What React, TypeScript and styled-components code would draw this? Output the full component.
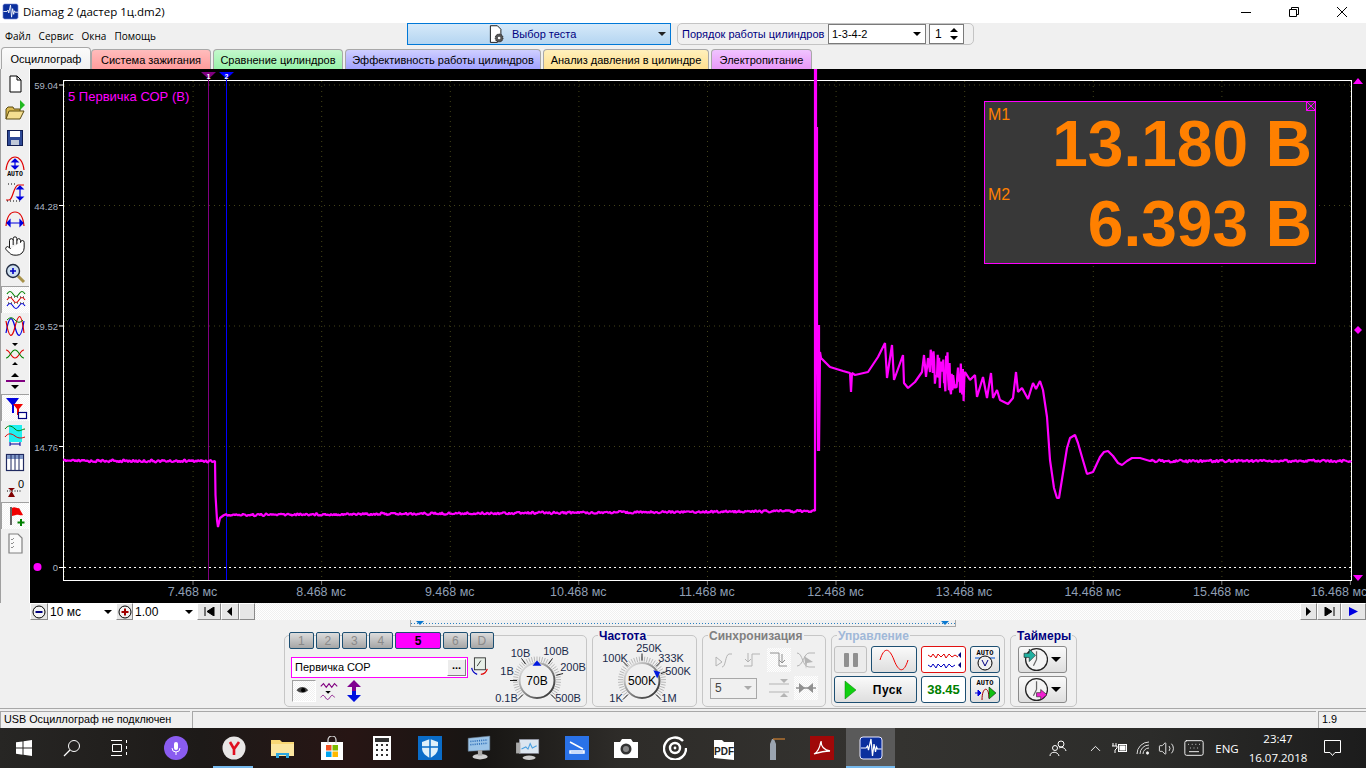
import React from 'react';
import styled, { createGlobalStyle } from 'styled-components';
import { Hand, Volume2, ChevronUp, Keyboard } from 'lucide-react';

const GlobalStyle = createGlobalStyle`
  html, body { margin: 0; padding: 0; overflow: hidden; background: #f0f0f0; }
  #root { width: 1366px; height: 768px; }
  * { box-sizing: border-box; }
`;

const Page = styled.div`
  width: 1366px;
  height: 768px;
  display: flex;
  flex-direction: column;
  font-family: 'Liberation Sans', Arial, sans-serif;
  font-size: 11px;
  color: #000;
  background: #f0f0f0;
`;

/* ---------- title + menu ---------- */
const TitleBar = styled.div`
  height: 23px;
  background: #fff;
  display: flex;
  align-items: center;
  padding-left: 2px;
`;
const TitleText = styled.span`
  margin-left: 4px;
  font-family: 'Open Sans', sans-serif;
  font-size: 11.5px;
  flex: 1;
`;
const WinButton = styled.div`
  width: 48px;
  height: 23px;
  display: flex;
  align-items: center;
  justify-content: center;
`;
const MenuBar = styled.div`
  height: 24px;
  display: flex;
  align-items: flex-start;
`;
const MenuList = styled.nav`
  width: 407px;
  height: 24px;
  display: flex;
  align-items: center;
  gap: 8px;
  padding: 2px 0 0 5px;
  font-family: 'Open Sans', sans-serif;
  font-size: 10px;
`;
const TestSelect = styled.div`
  width: 264px;
  height: 22px;
  border: 1px solid #0078d7;
  background: linear-gradient(#d6e9f9, #b4d5f1);
  display: flex;
  align-items: center;
  padding-left: 78px;
  color: #000080;
  position: relative;
`;
const TestLabel = styled.span`
  margin-left: 5px;
  font-size: 11px;
  flex: 1;
`;
const DropArrow = styled.i<{ $color?: string; $big?: boolean }>`
  width: 0;
  height: 0;
  border-left: ${(p) => (p.$big ? 5 : 4)}px solid transparent;
  border-right: ${(p) => (p.$big ? 5 : 4)}px solid transparent;
  border-top: ${(p) => (p.$big ? 5 : 4)}px solid ${(p) => p.$color || '#000'};
  margin: ${(p) => (p.$big ? '0 3px 0 0' : '0 4px')};
`;
const OrderBox = styled.div`
  margin-left: 6px;
  width: 297px;
  height: 22px;
  border: 1px solid #c4c4c4;
  border-radius: 5px;
  display: flex;
  align-items: center;
  padding-left: 4px;
  color: #000080;
  gap: 4px;
`;
const OrderLabel = styled.span`
  width: 142px;
  white-space: nowrap;
`;
const OrderSelect = styled.div`
  width: 98px;
  height: 20px;
  background: #fff;
  border: 1px solid #7a7a7a;
  color: #000;
  display: flex;
  align-items: center;
  justify-content: space-between;
  padding-left: 3px;
`;
const SpinBox = styled.div`
  width: 35px;
  height: 20px;
  margin-left: -1px;
  background: #fff;
  border: 1px solid #7a7a7a;
  color: #000;
  font-size: 12px;
  display: flex;
  align-items: center;
  justify-content: space-between;
  padding: 0 5px;
`;
const SpinArrows = styled.span`
  display: flex;
  flex-direction: column;
  gap: 4px;
`;
const Tri = styled.i<{ $up?: boolean }>`
  display: block;
  width: 0;
  height: 0;
  border-left: 4px solid transparent;
  border-right: 4px solid transparent;
  ${(p) => (p.$up ? 'border-bottom: 4px solid #000;' : 'border-top: 4px solid #000;')}
`;

/* ---------- tabs ---------- */
const TabStrip = styled.div`
  height: 22px;
  display: flex;
  align-items: flex-end;
  gap: 2px;
  padding-left: 1px;
`;
const TAB_TONES: Record<string, string> = {
  plain: 'linear-gradient(#fbfbfb, #f0f0f0)',
  red: 'linear-gradient(#ffbcbc, #ff9c9c)',
  green: 'linear-gradient(#c4f8cc, #98f2aa)',
  blue: 'linear-gradient(#cfcfff, #a2a2ff)',
  yellow: 'linear-gradient(#fff0bc, #ffe090)',
  purple: 'linear-gradient(#f0c4ff, #e898f8)',
};
const Tab = styled.div<{ $tone: string; $w: number; $active?: boolean }>`
  width: ${(p) => p.$w}px;
  height: ${(p) => (p.$active ? 22 : 20)}px;
  margin-right: ${(p) => (p.$active ? -2 : 0)}px;
  background: ${(p) => TAB_TONES[p.$tone]};
  border: 1px solid #a8a8a8;
  border-bottom: none;
  border-radius: 4px 4px 0 0;
  display: flex;
  align-items: center;
  justify-content: center;
  white-space: nowrap;
  font-size: 11px;
`;

/* ---------- workspace ---------- */
const Workspace = styled.div`
  height: 534px;
  display: flex;
`;
const ToolColumn = styled.div`
  width: 30px;
  border-left: 1px solid #a0a0a0;
  border-right: 1px solid #fff;
  padding-top: 1px;
  display: flex;
  flex-direction: column;
`;
const ToolButton = styled.div<{ $selected?: boolean }>`
  height: 27px;
  display: flex;
  align-items: center;
  justify-content: center;
  ${(p) =>
    p.$selected &&
    `background: repeating-conic-gradient(#fff 0 25%, #f4f4f4 0 50%) 0 0/2px 2px;
     border-top: 1px solid #a0a0a0;
     border-left: 1px solid #a0a0a0;`}
`;
const Scope = styled.div`
  position: relative;
  flex: 1;
  background: #000;
`;
const ScopeCanvas = styled.svg`
  display: block;
  width: 1336px;
  height: 534px;
`;
const ChannelLegend = styled.div`
  position: absolute;
  left: 38px;
  top: 20px;
  color: #ff00ff;
  font-size: 13px;
`;
const MeasurePanel = styled.div`
  position: absolute;
  left: 954px;
  top: 32px;
  width: 332px;
  height: 163px;
  background: #383838;
  border: 1px solid #ff00ff;
  color: #ff8000;
  padding: 0 3px 0 3px;
`;
const MeasureRow = styled.div`
  height: 80px;
  display: flex;
  justify-content: space-between;
`;
const MeasureName = styled.span`
  font-size: 16px;
  line-height: 18px;
  margin-top: 4px;
`;
const MeasureValue = styled.span`
  font-size: 64px;
  font-weight: bold;
  line-height: 64px;
  margin-top: 10px;
`;
const MeasureClose = styled.svg`
  position: absolute;
  right: -1px;
  top: -1px;
`;
const AxisY = styled.text`
  font-size: 9.5px;
  fill: #a9b4c2;
  text-anchor: end;
`;
const AxisX = styled.text`
  font-size: 12.5px;
  fill: #8f9fb4;
  text-anchor: middle;
`;

/* ---------- scroll row ---------- */
const ScrollRow = styled.div`
  height: 17px;
  margin-left: 30px;
  display: flex;
  background: #fff;
`;
const Bevel = styled.div<{ $w: number }>`
  width: ${(p) => p.$w}px;
  height: 17px;
  flex: none;
  background: #e6e6e6;
  border: 1px solid;
  border-color: #fff #8a8a8a #8a8a8a #fff;
  display: flex;
  align-items: center;
  justify-content: center;
`;
const ComboText = styled.div<{ $w: number }>`
  width: ${(p) => p.$w}px;
  height: 17px;
  flex: none;
  background: #fff;
  display: flex;
  align-items: center;
  justify-content: space-between;
  padding-left: 2px;
  font-size: 12px;
`;
const ScrollTrack = styled.div`
  flex: 1;
  background: repeating-conic-gradient(#fff 0 25%, #f0f0f0 0 50%) 0 0/2px 2px;
`;

/* ---------- control deck ---------- */
const Deck = styled.div`
  height: 88px;
  display: flex;
  flex-direction: column;
`;
const Splitter = styled.div`
  height: 7px;
  width: 546px;
  margin-left: 410px;
  border: 1px solid #a8a8a8;
  border-top: none;
  display: flex;
  align-items: center;
  padding: 0 6px 0 5px;
  justify-content: space-between;
  background-image: linear-gradient(to right, #2a7fc0 1px, transparent 1px);
  background-size: 3px 1px;
  background-repeat: repeat-x;
  background-position: 0 3px;
`;
const SplitterMark = styled.i`
  width: 0;
  height: 0;
  border-left: 4px solid transparent;
  border-right: 4px solid transparent;
  border-top: 4px solid #0a78d0;
`;
const GroupRow = styled.div`
  display: flex;
  gap: 5px;
  padding: 8px 0 0 284px;
`;
const Group = styled.div<{ $w: number }>`
  position: relative;
  width: ${(p) => p.$w}px;
  height: 72px;
  border: 1px solid #c6c6c6;
  border-radius: 5px;
`;
const GroupTitle = styled.span<{ $color: string }>`
  position: absolute;
  left: 5px;
  top: -6px;
  padding: 0 1px;
  background: #f0f0f0;
  font-size: 12px;
  line-height: 13px;
  font-weight: bold;
  color: ${(p) => p.$color};
  white-space: nowrap;
`;
const ChannelGroupBody = styled.div`
  height: 70px;
  display: flex;
  justify-content: space-between;
  align-items: flex-end;
`;
const ChannelColumn = styled.div`
  width: 209px;
  height: 74px;
  padding-left: 4px;
  align-self: flex-start;
  margin-top: -4px;
`;
const ChannelRow = styled.div`
  display: flex;
  gap: 2px;
`;
const ChannelButton = styled.div<{ $active?: boolean }>`
  width: ${(p) => (p.$active ? 47 : 25)}px;
  height: 17px;
  border: 1px solid #1d4f72;
  border-radius: 2px;
  background: ${(p) => (p.$active ? '#ff00ff' : 'linear-gradient(#dcdcdc, #a6a6a6)')};
  color: ${(p) => (p.$active ? '#000' : '#8a8a8a')};
  font-weight: ${(p) => (p.$active ? 'bold' : 'normal')};
  font-size: 12px;
  display: flex;
  align-items: center;
  justify-content: center;
`;
const ChannelInputRow = styled.div`
  display: flex;
  align-items: center;
  margin: 7px 0 0 2px;
`;
const ChannelInput = styled.div`
  width: 177px;
  height: 21px;
  border: 1px solid #ff00ff;
  background: #fff;
  display: flex;
  align-items: center;
  justify-content: space-between;
  padding: 0 0 0 3px;
  font-size: 11px;
`;
const DotsButton = styled.div`
  width: 19px;
  height: 17px;
  margin-right: 1px;
  background: #ececec;
  border: 1px solid;
  border-color: #fff #808080 #808080 #fff;
  font-weight: bold;
  line-height: 11px;
  text-align: center;
`;
const ChannelTools = styled.div`
  display: flex;
  align-items: center;
  gap: 1px;
  margin: 2px 0 0 3px;
`;
const MiniTool = styled.div<{ $selected?: boolean }>`
  width: 24px;
  height: 22px;
  display: flex;
  align-items: center;
  justify-content: center;
  ${(p) =>
    p.$selected &&
    `background: repeating-conic-gradient(#fff 0 25%, #f0f0f0 0 50%) 0 0/2px 2px;
     border: 1px solid; border-color: #a0a0a0 #fff #fff #a0a0a0;`}
`;
const DialCanvas = styled.svg`
  display: block;
  flex: none;
`;
const DialLabel = styled.text`
  font-size: 11px;
  fill: #1b2a4a;
  text-anchor: middle;
`;
const DialValue = styled.text`
  font-size: 12px;
  fill: #000;
  text-anchor: middle;
`;
const SyncGrid = styled.div`
  display: grid;
  grid-template-columns: repeat(4, 27px);
  grid-auto-rows: 28px;
  padding: 10px 0 0 8px;
  align-items: center;
  justify-items: center;
`;
const SyncCell = styled.div<{ $dither?: boolean }>`
  width: 24px;
  height: 24px;
  display: flex;
  align-items: center;
  justify-content: center;
  ${(p) => p.$dither && 'background: repeating-conic-gradient(#fff 0 25%, #f0f0f0 0 50%) 0 0/2px 2px;'}
`;
const SyncSelect = styled.div`
  grid-column: span 2;
  justify-self: start;
  margin-left: -1px;
  width: 47px;
  height: 21px;
  border: 1px solid #a8a8a8;
  color: #444;
  font-size: 12px;
  display: flex;
  align-items: center;
  justify-content: space-between;
  padding-left: 4px;
`;
const ControlGrid = styled.div`
  display: grid;
  grid-template-columns: 33px 46px 45px 30px;
  grid-auto-rows: 27px;
  gap: 3px 4px;
  padding: 10px 0 0 2px;
`;
const ControlButton = styled.div<{ $tone?: 'navy' | 'red' | 'off' | 'white'; $span?: number }>`
  grid-column: span ${(p) => p.$span || 1};
  border-radius: 3px;
  border: 1px solid
    ${(p) => (p.$tone === 'red' ? '#e01010' : p.$tone === 'off' ? '#c0c0c0' : '#1d4f72')};
  background: ${(p) =>
    p.$tone === 'red' || p.$tone === 'white'
      ? '#fff'
      : p.$tone === 'off'
        ? '#ececec'
        : 'linear-gradient(#fafafa, #dedede)'};
  display: flex;
  align-items: center;
  justify-content: center;
`;
const StartMark = styled.svg`
  margin-left: 8px;
  flex: none;
`;
const StartLabel = styled.span`
  font-size: 12px;
  font-weight: bold;
  letter-spacing: 0.4px;
  flex: 1;
  text-align: center;
  padding-right: 6px;
`;
const TimerValue = styled.span`
  color: #008000;
  font-size: 13px;
  font-weight: bold;
`;
const TimerColumn = styled.div`
  display: flex;
  flex-direction: column;
  gap: 3px;
  padding: 10px 0 0 7px;
`;
const TimerButton = styled.div`
  width: 49px;
  height: 27px;
  border: 1px solid #8a8a8a;
  border-radius: 3px;
  background: linear-gradient(#fafafa, #dedede);
  display: flex;
  align-items: center;
  justify-content: space-between;
  padding: 0 2px 0 4px;
`;

/* ---------- status + taskbar ---------- */
const StatusBar = styled.div`
  height: 20px;
  border-top: 1px solid #a8a8a8;
  padding-top: 2px;
  display: flex;
  gap: 2px;
`;
const StatusCell = styled.div<{ $w?: number }>`
  ${(p) => (p.$w ? `width: ${p.$w}px; flex: none;` : 'flex: 1;')}
  border: 1px solid #d6d6d6;
  border-width: 1px 0 0 1px;
  border-top-color: #a8a8a8;
  border-left-color: #a8a8a8;
  padding-left: 3px;
  line-height: 15px;
  font-size: 10.8px;
`;
const Taskbar = styled.div`
  height: 40px;
  display: flex;
  align-items: stretch;
  color: #fff;
  background: linear-gradient(
    to right,
    #272624 0,
    #1d1a18 200px,
    #271514 350px,
    #171513 480px,
    #2e2c29 620px,
    #343330 900px,
    #2c2c2a 1150px,
    #1c1c1c 1366px
  );
`;
const TaskItem = styled.div<{ $w?: number; $active?: boolean; $running?: boolean; $before?: number; $after?: number }>`
  width: ${(p) => p.$w || 49}px;
  margin: 0 ${(p) => p.$after || 0}px 0 ${(p) => p.$before || 0}px;
  position: relative;
  display: flex;
  align-items: center;
  justify-content: center;
  ${(p) => p.$active && 'background: #5a5a5a;'}
  ${(p) =>
    p.$running &&
    `&::after {
      content: '';
      position: absolute;
      bottom: 0;
      left: ${p.$active ? 0 : 4}px;
      right: ${p.$active ? 0 : 5}px;
      height: 2px;
      background: #76b9ed;
    }`}
`;
const Tray = styled.div`
  margin-left: auto;
  display: flex;
  align-items: center;
  font-family: 'Open Sans', sans-serif;
  font-size: 11.5px;
`;
const TraySlot = styled.div<{ $w: number }>`
  width: ${(p) => p.$w}px;
  display: flex;
  align-items: center;
  justify-content: center;
`;
const Clock = styled.div`
  width: 70px;
  text-align: center;
  line-height: 19px;
  margin-right: 7px;
`;
const NotifySlot = styled.div`
  width: 46px;
  display: flex;
  padding-left: 4px;
`;

/* ---------- trace data ---------- */
const noise = (i: number) => {
  const v = Math.sin(i * 12.9898) * 43758.5453;
  return v - Math.floor(v) - 0.5;
};

const TAIL: [number, number][] = [
  [821, 358], [830, 367], [843, 371], [850, 373], [851, 392], [852, 373], [855, 375], [868, 372],
  [878, 357], [885, 343], [887, 378], [892, 345], [894, 380], [903, 355], [904, 383], [908, 388],
  [915, 382], [922, 372], [924, 355], [926, 377], [928, 358], [930, 372],
];
const TAIL_2: [number, number][] = [
  [965, 372], [970, 380], [975, 375], [977, 397], [983, 377], [987, 398], [991, 373], [993, 398],
  [997, 390], [1000, 400], [1008, 404], [1013, 398], [1016, 372], [1018, 392], [1022, 388],
  [1028, 399], [1033, 383], [1036, 389], [1040, 381], [1043, 390], [1047, 417], [1050, 460],
  [1054, 488], [1057, 498], [1059, 498], [1063, 473], [1067, 448], [1070, 438], [1075, 435],
  [1078, 443], [1082, 457], [1087, 474], [1093, 472], [1100, 457], [1104, 452], [1108, 451],
  [1113, 456], [1118, 463], [1122, 465], [1127, 461], [1132, 458], [1140, 458], [1150, 461],
];

const buildTrace = () => {
  const pts: [number, number][] = [];
  for (let x = 63; x < 215; x += 1) pts.push([x, 461 + noise(x) * 2.8]);
  pts.push([215, 461], [215.5, 495], [217, 520], [218, 527], [220, 518], [224, 515]);
  for (let x = 224; x < 815; x += 1) {
    pts.push([x, 515 - ((x - 224) / 591) * 4 + noise(x) * 2.6]);
  }
  pts.push([815, 511], [815, 69], [816, 69], [816, 330], [817, 127], [817, 352], [818, 451], [819, 325], [819, 451], [820, 352]);
  pts.push(...TAIL);
  for (let x = 930; x < 965; x += 0.7) {
    const env = 370 - Math.sin(((x - 930) / 35) * Math.PI) * 3 + (x - 930) * 0.3;
    pts.push([x, env + noise(x * 1.37) * 44]);
  }
  pts.push(...TAIL_2);
  for (let x = 1150; x <= 1351; x += 1) pts.push([x, 461 + noise(x) * 2.8]);
  return 'M' + pts.map(([x, y]) => `${x} ${y.toFixed(1)}`).join('L');
};
const TRACE = buildTrace();

const GRID_X = Array.from({ length: 11 }, (_, i) => 64.5 + i * 128.6);
const LEVELS = [
  { y: 85, label: '59.04' },
  { y: 205.5, label: '44.28' },
  { y: 326, label: '29.52' },
  { y: 446.5, label: '14.76' },
];
const TIMES = ['7.468', '8.468', '9.468', '10.468', '11.468', '12.468', '13.468', '14.468', '15.468', '16.468'];

const ScopeChart = () => (
  <ScopeCanvas viewBox="30 69 1336 534">
    {GRID_X.map((x) => (
      <line key={x} x1={x} x2={x} y1={81} y2={580} stroke="#44441a" strokeDasharray="1 4" />
    ))}
    {LEVELS.map((l) => (
      <g key={l.y}>
        <line x1={64} x2={1351} y1={l.y} y2={l.y} stroke="#44441a" strokeDasharray="1 4" />
        <line x1={59} x2={63} y1={l.y} y2={l.y} stroke="#fff" />
        <AxisY x={58} y={l.y + 4}>{l.label}</AxisY>
      </g>
    ))}
    <line x1={64} x2={1351} y1={567.5} y2={567.5} stroke="#fff" strokeDasharray="2 3" />
    <line x1={59} x2={63} y1={567.5} y2={567.5} stroke="#fff" />
    <AxisY x={58} y={571}>0</AxisY>
    <circle cx={37.5} cy={567} r={4} fill="#ff00ff" />
    <rect x={63.5} y={80.5} width={1288} height={500} fill="none" stroke="#fff" />
    {TIMES.map((t, i) => (
      <g key={t}>
        <line x1={193 + i * 128.6} x2={193 + i * 128.6} y1={581} y2={585} stroke="#777" />
        <AxisX x={Math.min(192.5 + i * 128.6, 1339)} y={596}>{t} мс</AxisX>
      </g>
    ))}
    <line x1={208.5} x2={208.5} y1={72} y2={580} stroke="#800080" />
    <path d="M201 72h15l-7.500 7z" fill="#800080" />
    <text x={208.500} y={79} fontSize={7} fontWeight="bold" fill="#fff" textAnchor="middle">1</text>
    <line x1={226.5} x2={226.5} y1={72} y2={580} stroke="#0000ff" />
    <path d="M219 72h15l-7.500 7z" fill="#0000ff" />
    <text x={226.500} y={79} fontSize={7} fontWeight="bold" fill="#fff" textAnchor="middle">2</text>
    <path d={TRACE} fill="none" stroke="#ff00ff" strokeWidth={2.2} strokeLinejoin="bevel" />
    <path d="M1358 78l5 6h-10z" fill="#ff00ff" />
    <path d="M1358 326l4 4-4 4-4-4z" fill="#ff00ff" />
    <path d="M1358 581l5-6h-10z" fill="#ff00ff" />
  </ScopeCanvas>
);

/* ---------- small drawings ---------- */
const Ico = ({ children, s = 24 }: { children: React.ReactNode; s?: number }) => (
  <svg width={s} height={s} viewBox="0 0 24 24" fill="none">{children}</svg>
);
const Wave = ({ y, color, amp = 2.500 }: { y: number; color: string; amp?: number }) => (
  <path d={`M3 ${y}q3 -${amp * 2} 6 0t6 0t6 0`} stroke={color} strokeWidth={1.1} />
);
const VArrow = ({ x, y1, y2 }: { x: number; y1: number; y2: number }) => (
  <path d={`M${x} ${y1}v${y2 - y1}M${x - 3} ${y1 + 3}l3-3 3 3zM${x - 3} ${y2 - 3}l3 3 3-3z`} stroke="#0000e0" fill="#0000e0" strokeWidth={1.2} />
);
const AppLogo = ({ s }: { s: number }) => (
  <svg width={s} height={s} viewBox="0 0 24 24">
    <rect x={1} y={1} width={22} height={22} rx={3} fill="#0b2f9e" stroke="#e8e8ff" strokeWidth={1} />
    <path d="M2 12h5l1.500-2 1 4L12 3l1.500 17 1.500-12 1.500 8 1-5 1 2h4" stroke="#fff" strokeWidth={1.2} fill="none" />
  </svg>
);

const TOOLS: { icon: React.ReactNode; selected?: boolean }[] = [
  { icon: <Ico><path d="M7 4h7l4 4v12H7z" fill="#fff" stroke="#000" /><path d="M14 4v4h4" stroke="#000" /></Ico> },
  { icon: <Ico><path d="M3 20V10l2-2h5l1 2h6v2" fill="#d8b850" stroke="#5a4a10" /><path d="M3 20l3-8h15l-4 8z" fill="#f4de90" stroke="#5a4a10" /><path d="M17 1l5 5-5 5z" fill="#20b820" /></Ico> },
  { icon: <Ico><rect x={4.500} y={4.500} width={15} height={15} fill="#2f4a96" stroke="#101c50" /><rect x={7} y={5} width={10} height={6} fill="#fff" /><rect x={8} y={14} width={8} height={5} fill="#c0c8d8" /></Ico> },
  { icon: <Ico><path d="M3 17C4 8 8 4 12 4s8 4 9 13" stroke="#e00000" strokeWidth={1.2} /><VArrow x={12} y1={6} y2={16} /><text x={12} y={23} fontSize={6.500} fontWeight="bold" fill="#000" textAnchor="middle" fontFamily="Liberation Mono">AUTO</text></Ico> },
  { icon: <Ico><path d="M3 20h3C10 20 10 7 15 5h6" stroke="#e00000" strokeWidth={1.2} /><path d="M5 4h9M4 21h14" stroke="#000" strokeDasharray="1 2" /><VArrow x={17} y1={6} y2={20} /></Ico> },
  { icon: <Ico><path d="M3 19C4 9 8 5 12 5s8 4 9 14" stroke="#e00000" strokeWidth={1.2} /><path d="M4 16h16M7 13l-3 3 3 3zM17 13l3 3-3 3z" stroke="#0000e0" fill="#0000e0" strokeWidth={1.2} /></Ico> },
  { icon: <Hand size={22} color="#000" fill="#fff" strokeWidth={1} /> },
  { icon: <Ico><path d="M15 15l6 6" stroke="#a8924a" strokeWidth={3} /><circle cx={10} cy={10} r={6.500} fill="#cfe0f0" stroke="#202a40" strokeWidth={1.4} /><path d="M10 7v6M7 10h6" stroke="#0000c0" strokeWidth={1.6} /></Ico> },
  { selected: true, icon: <Ico><Wave y={6} color="#008000" /><Wave y={12} color="#e00000" /><Wave y={18} color="#0000e0" /><path d="M4 9h16M4 15h16" stroke="#000" strokeDasharray="1 2" /></Ico> },
  { icon: <Ico><path d="M3 18C6 0 9 0 12 12s6 12 9-6" stroke="#0000e0" strokeWidth={1.2} /><path d="M3 6c3 18 6 18 9 6s6-18 9 6" stroke="#e00000" strokeWidth={1.2} /><path d="M4 5c3-3 5-3 8 0s5 3 8 0" stroke="#008000" /></Ico> },
  { icon: <Ico><path d="M3 8c4 0 5 8 9 8s5-8 9-8" stroke="#e00000" strokeWidth={1.2} /><path d="M3 16c4 0 5-8 9-8s5 8 9 8" stroke="#008000" strokeWidth={1.2} /><path d="M9 1h6l-3 3zM9 23h6l-3-3z" fill="#000" /></Ico> },
  { icon: <Ico><path d="M8 8l4-4 4 4zM8 16l4 4 4-4z" fill="#000" /><rect x={3} y={11} width={19} height={2} fill="#800080" /></Ico> },
  { selected: true, icon: <Ico><path d="M2 2h13l-5 7v8H8V9z" fill="#0000e0" /><path d="M9 8h10l-4 5v6h-2v-6z" fill="#f00000" /><rect x={14.500} y={16.500} width={8} height={6} fill="#fff" stroke="#000080" strokeWidth={1.200} /></Ico> },
  { icon: <Ico><rect x={6} y={2} width={13} height={17} fill="#20f0f0" /><path d="M2 6c3-4 6-4 10 0s7 0 10 0" stroke="#008000" /><path d="M2 14c3-4 6-4 10-1s7 2 10 1" stroke="#e00000" /><path d="M7 21h10M7 19v4M17 19v4" stroke="#0000a0" /></Ico> },
  { icon: <Ico><rect x={3.500} y={4.500} width={17} height={16} fill="#fff" stroke="#202a60" strokeWidth={1.2} /><rect x={4} y={5} width={16} height={4} fill="#8098c8" /><path d="M8 5v15M12 5v15M16 5v15" stroke="#202a60" /></Ico> },
  { icon: <Ico><path d="M4 14h15" stroke="#000" strokeDasharray="1 1.500" /><path d="M5 11h7l-3.500 3zM5 20h7l-3.500-6z" fill="#800000" /><text x={18} y={11} fontSize={11} fill="#000" textAnchor="middle" fontFamily="Liberation Sans">0</text></Ico> },
  { selected: true, icon: <Ico><path d="M7 3v18" stroke="#000" strokeWidth={1.200} /><path d="M8 4c3-2 5 1 7 0l4 7c-3 1-5-1-7 0l-4 1z" fill="#f00000" /><path d="M17 15v7M13.500 18.500h7" stroke="#008000" strokeWidth={2} /></Ico> },
  { icon: <Ico><path d="M6 3h9l4 4v15H6z" fill="#fafafa" stroke="#808080" strokeWidth={1.200} /><path d="M8 8l1 1 2-2M8 12l1 1 2-2M8 16l1 1 2-2" stroke="#909090" /></Ico> },
];

const TABS = [
  { label: 'Осциллограф', tone: 'plain', width: 90, active: true },
  { label: 'Система зажигания', tone: 'red', width: 120 },
  { label: 'Сравнение цилиндров', tone: 'green', width: 130 },
  { label: 'Эффективность работы цилиндров', tone: 'blue', width: 196 },
  { label: 'Анализ давления в цилиндре', tone: 'yellow', width: 166 },
  { label: 'Электропитание', tone: 'purple', width: 101 },
];

type DialMark = { x: number; y: number; t: string };
const Dial = ({ left, top, w, h, cx, cy, value, marks, pointer, spokes }: {
  left: number; top: number; w: number; h: number; cx: number; cy: number; value: string;
  marks: DialMark[]; pointer: number; spokes: number[];
}) => {
  const id = `ring${cx}`;
  const fine = Array.from({ length: 41 }, (_, i) => (-225 + (i * 270) / 40) * (Math.PI / 180));
  const a = (pointer * Math.PI) / 180;
  return (
    <DialCanvas width={w} height={h} viewBox={`${left} ${top} ${w} ${h}`}>
      <defs>
        <linearGradient id={id} x1="0" y1="0" x2="1" y2="1">
          <stop offset="0" stopColor="#f4f4f4" />
          <stop offset="1" stopColor="#222" />
        </linearGradient>
      </defs>
      {fine.map((t, i) => (
        <line key={i} x1={cx + Math.cos(t) * 19} y1={cy + Math.sin(t) * 19} x2={cx + Math.cos(t) * 24} y2={cy + Math.sin(t) * 24} stroke="#b8b8b8" />
      ))}
      {spokes.map((d) => {
        const t = (d * Math.PI) / 180;
        return <line key={d} x1={cx + Math.cos(t) * 20} y1={cy + Math.sin(t) * 20} x2={cx + Math.cos(t) * 27} y2={cy + Math.sin(t) * 27} stroke="#222" />;
      })}
      <circle cx={cx} cy={cy} r={17.500} fill="#f0f0f0" stroke={`url(#${id})`} strokeWidth={2} />
      <path d={`M${cx + Math.cos(a) * 20} ${cy + Math.sin(a) * 20}l${-Math.cos(a - 0.7) * 7} ${-Math.sin(a - 0.7) * 7}l${Math.cos(a - 0.7) * 7 - Math.cos(a + 0.7) * 7} ${Math.sin(a - 0.7) * 7 - Math.sin(a + 0.7) * 7}z`} fill="#0018e0" />
      <DialValue x={cx} y={cy + 4.5}>{value}</DialValue>
      {marks.map((m) => (
        <DialLabel key={m.t} x={m.x} y={m.y + 4}>{m.t}</DialLabel>
      ))}
    </DialCanvas>
  );
};

const VOLT_MARKS: DialMark[] = [
  { x: 520.5, y: 653, t: '10В' }, { x: 556, y: 650.5, t: '100В' }, { x: 507, y: 670.5, t: '1В' },
  { x: 573, y: 667, t: '200В' }, { x: 506.5, y: 698, t: '0.1В' }, { x: 568, y: 698, t: '500В' },
];
const FREQ_MARKS: DialMark[] = [
  { x: 614, y: 658, t: '100K' }, { x: 648, y: 648, t: '250K' }, { x: 670, y: 658, t: '333K' },
  { x: 677, y: 670.5, t: '500K' }, { x: 615, y: 698, t: '1K' }, { x: 668, y: 698, t: '1M' },
];

const SYNC_STROKE = '#b4b4b4';
const TIMER_ARROW = { teal: '#20b0a0', pink: '#f020d0' };

const ClockFace = ({ arrow, out }: { arrow: string; out?: boolean }) => (
  <Ico s={25}>
    <circle cx={13} cy={12} r={10.500} fill="#f4f4f4" stroke="#222" strokeWidth={1.200} />
    <path d="M13 12V4M13 12l-3 6" stroke="#666" strokeWidth={1.200} />
    {out
      ? <path d="M13 15h4v-3l6 5-6 5v-3h-4z" fill={arrow} stroke="#222" strokeWidth={0.600} />
      : <path d="M1 6h5V2l6 6-6 6v-4H1z" fill={arrow} stroke="#222" strokeWidth={0.600} />}
  </Ico>
);

/* taskbar icons, one per pinned app */
const TASK_APPS: { icon: React.ReactNode; running?: boolean; active?: boolean }[] = [
  { running: true, icon: <Ico s={24}><circle cx={12} cy={12} r={11.500} fill="#e8e6e6" /><path d="M8 6l4 7 5-7M12 13v6" stroke="#e01020" strokeWidth={2.600} /></Ico> },
  { icon: <Ico s={24}><path d="M0 20V4h9l2 2h12v14z" fill="#f8d775" /><rect x={0} y={8} width={23} height={12} fill="#fbe6a0" /><path d="M5 22v-5h13v5h-3v-3H8v3z" fill="#2ea8e0" /></Ico> },
  { icon: <Ico s={24}><path d="M1 6h22v18H1z" fill="#fff" /><path d="M8 8V4a4 4 0 018 0v4" stroke="#ddd" strokeWidth={1.200} /><rect x={6} y={9} width={5.500} height={5.500} fill="#f25022" /><rect x={12.500} y={9} width={5.500} height={5.500} fill="#7fba00" /><rect x={6} y={15.500} width={5.500} height={5.500} fill="#00a4ef" /><rect x={12.500} y={15.500} width={5.500} height={5.500} fill="#ffb900" /></Ico> },
  { icon: <Ico s={24}><rect x={4} y={0} width={18} height={24} fill="#fff" /><rect x={6} y={2} width={14} height={4} fill="#333" /><path d="M7 9h2M12 9h2M17 9h2M7 14h2M12 14h2M17 14h2M7 19h2M12 19h2M17 19h2" stroke="#333" strokeWidth={2} /></Ico> },
  { icon: <Ico s={24}><rect width={24} height={24} fill="#0a6cc8" /><path d="M12 3l8 3v6c0 5-4 8-8 10-4-2-8-5-8-10V6z" fill="#dff0fa" /><path d="M12 3v19M4 11h16" stroke="#0a6cc8" strokeWidth={1.500} /></Ico> },
  { icon: <Ico s={26}><path d="M2 3l20-2v13L2 15z" fill="#9bc4e8" stroke="#678" strokeWidth={0.500} /><path d="M4 6l16-1.500M4 9l16-1.500" stroke="#2f6fb8" strokeWidth={1.500} strokeDasharray="1 1" /><ellipse cx={13} cy={20} rx={7} ry={2.500} fill="#d0d0d0" /><rect x={11} y={14} width={4} height={5} fill="#aaa" /></Ico> },
  { icon: <Ico s={26}><rect x={4} y={4} width={18} height={13} fill="#dce6f0" stroke="#889" strokeWidth={0.500} /><path d="M6 13l4-2 2 2 2-5 2 4 4-2" stroke="#4aa0e0" /><rect x={1} y={7} width={4} height={10} fill="#aaa" /><ellipse cx={13} cy={21} rx={6} ry={2} fill="#ccc" /></Ico> },
  { icon: <Ico s={24}><rect width={24} height={24} fill="#2a72e8" /><path d="M5 6l13 7M5 15h14v2H5z" stroke="#fff" strokeWidth={1.500} /></Ico> },
  { icon: <Ico s={24}><path d="M0 6h6l2-3h9l2 3h5v16H0z" fill="#fff" /><circle cx={12} cy={13} r={5.500} fill="#333" /><circle cx={12} cy={13} r={3} fill="#888" /></Ico> },
  { icon: <Ico s={24}><path d="M20 5A11 11 0 1 0 23 12" stroke="#fff" strokeWidth={2.400} /><circle cx={12} cy={12} r={5} stroke="#fff" strokeWidth={2.400} /><circle cx={12} cy={12} r={1.400} fill="#fff" /></Ico> },
  { icon: <Ico s={24}><path d="M2 4h8l2 2h10v18l-20-2z" fill="#fff" /><text x={12} y={19} fontSize={10} fontWeight="bold" fill="#222" textAnchor="middle" fontFamily="Liberation Sans">PDF</text></Ico> },
  { icon: <Ico s={24}><path d="M11 3l-2 5v16h6V8l-2-5z" fill="#9aa4b0" /><path d="M12 3h12" stroke="#b07030" strokeWidth={1.500} /></Ico> },
  { icon: <Ico s={24}><rect width={24} height={24} fill="#a00808" /><path d="M4 18c4-2 6-7 7-13 0 5 3 9 9 10-5 0-10 1-16 3z" stroke="#fff" strokeWidth={1.300} /></Ico> },
  { running: true, active: true, icon: <AppLogo s={24} /> },
];

const App = () => (
  <Page>
    <GlobalStyle />
    <TitleBar>
      <AppLogo s={17} />
      <TitleText>Diamag 2 (дастер 1ц.dm2)</TitleText>
      <WinButton><svg width={10} height={10}><path d="M0 5.500h10" stroke="#000" /></svg></WinButton>
      <WinButton><svg width={10} height={10}><path d="M.5 2.500h7v7h-7zM2.500 2.500v-2h7v7h-2" stroke="#000" fill="none" /></svg></WinButton>
      <WinButton><svg width={10} height={10}><path d="M0 0l10 10M10 0L0 10" stroke="#000" /></svg></WinButton>
    </TitleBar>

    <MenuBar>
      <MenuList>
        <span>Файл</span><span>Сервис</span><span>Окна</span><span>Помощь</span>
      </MenuList>
      <TestSelect>
        <Ico s={21}><path d="M5 2h8l4 4v9H13v6H5z" fill="#fff" stroke="#000" /><circle cx={15} cy={16} r={4.500} fill="#555" stroke="#222" strokeDasharray="1.500 1" /><circle cx={15} cy={16} r={1.500} fill="#fff" /></Ico>
        <TestLabel>Выбор теста</TestLabel>
        <DropArrow $color="#222" />
      </TestSelect>
      <OrderBox>
        <OrderLabel>Порядок работы цилиндров</OrderLabel>
        <OrderSelect>1-3-4-2<DropArrow /></OrderSelect>
        <SpinBox>1<SpinArrows><Tri $up /><Tri /></SpinArrows></SpinBox>
      </OrderBox>
    </MenuBar>

    <TabStrip>
      {TABS.map((t) => (
        <Tab key={t.label} $tone={t.tone} $active={t.active} $w={t.width}>{t.label}</Tab>
      ))}
    </TabStrip>

    <Workspace>
      <ToolColumn>
        {TOOLS.map((t, i) => (
          <ToolButton key={i} $selected={t.selected}>{t.icon}</ToolButton>
        ))}
      </ToolColumn>
      <Scope>
        <ScopeChart />
        <ChannelLegend>5 Первичка СОР (В)</ChannelLegend>
        <MeasurePanel>
          <MeasureClose width={10} height={10}><path d="M.5.5h9v9h-9zM.5.5l9 9M9.500.5l-9 9" stroke="#ff00ff" fill="none" /></MeasureClose>
          <MeasureRow><MeasureName>M1</MeasureName><MeasureValue>13.180 В</MeasureValue></MeasureRow>
          <MeasureRow><MeasureName>M2</MeasureName><MeasureValue>6.393 В</MeasureValue></MeasureRow>
        </MeasurePanel>
      </Scope>
    </Workspace>

    <ScrollRow>
      <Bevel $w={18}><svg width={14} height={14}><circle cx={7} cy={7} r={6} fill="#f4f4f4" stroke="#000" /><path d="M3.500 7h7" stroke="#000080" strokeWidth={2} /></svg></Bevel>
      <ComboText $w={68}>10 мс<DropArrow /></ComboText>
      <Bevel $w={17}><svg width={14} height={14}><circle cx={7} cy={7} r={6} fill="#f4f4f4" stroke="#000" /><path d="M3.500 7h7M7 3.500v7" stroke="#a00000" strokeWidth={2} /></svg></Bevel>
      <ComboText $w={64}>1.00<DropArrow /></ComboText>
      <Bevel $w={24}><svg width={11} height={9}><path d="M1 0v9M10 0v9L3 4.500z" stroke="#000" fill="#000" /></svg></Bevel>
      <Bevel $w={18}><svg width={6} height={9}><path d="M5 0v9L0 4.500z" fill="#000" /></svg></Bevel>
      <Bevel $w={16} />
      <ScrollTrack />
      <Bevel $w={17}><svg width={6} height={9}><path d="M0 0v9l5-4.500z" fill="#000" /></svg></Bevel>
      <Bevel $w={24}><svg width={11} height={9}><path d="M10 0v9M1 0v9l7-4.500z" stroke="#000" fill="#000" /></svg></Bevel>
      <Bevel $w={25}><svg width={9} height={9}><path d="M0 0v9l9-4.500z" fill="#0000e0" /></svg></Bevel>
    </ScrollRow>

    <Deck>
      <Splitter><SplitterMark /><SplitterMark /></Splitter>
      <GroupRow>
        <Group $w={303}>
          <ChannelGroupBody>
            <ChannelColumn>
              <ChannelRow>
                {['1', '2', '3', '4', '5', '6', 'D'].map((c) => (
                  <ChannelButton key={c} $active={c === '5'}>{c}</ChannelButton>
                ))}
              </ChannelRow>
              <ChannelInputRow>
                <ChannelInput>Первичка СОР<DotsButton>...</DotsButton></ChannelInput>
                <Ico s={22}><rect x={7} y={2} width={12} height={13} fill="#e8f0e8" stroke="#333" /><path d="M10 11l4-6" stroke="#333" /><path d="M4 13a9 9 0 006 7" stroke="#0000c0" strokeWidth={1.300} /><path d="M21 14a8 8 0 01-7 6" stroke="#e00000" strokeWidth={1.300} /></Ico>
              </ChannelInputRow>
              <ChannelTools>
                <MiniTool $selected><Ico s={20}><path d="M3 11c4-5 10-5 14 0-4 4-10 4-14 0z" fill="#444" /><circle cx={11} cy={11} r={2.500} fill="#000" /></Ico></MiniTool>
                <MiniTool><Ico s={22}><path d="M3 7l3-3 3 4 3-4 3 4 3-4 3 3" stroke="#800080" strokeWidth={1.200} /><path d="M8 12h6l-3 3z" fill="#000" /><path d="M3 19c2-3 3-3 5 0s3 3 5 0 3-3 5 0" stroke="#800080" /></Ico></MiniTool>
                <MiniTool><Ico s={24}><path d="M12 1l7 7h-5v4h-4V8H5z" fill="#800090" /><path d="M12 23l7-7h-5v-4h-4v4H5z" fill="#0010e0" /></Ico></MiniTool>
              </ChannelTools>
            </ChannelColumn>
            <Dial left={494} top={640} w={92} h={66} cx={537} cy={680.5} value="70В" marks={VOLT_MARKS} pointer={-90} spokes={[-225, -180, -125, -55, -15, 45]} />
          </ChannelGroupBody>
        </Group>

        <Group $w={105}>
          <GroupTitle $color="#000080">Частота</GroupTitle>
          <ChannelGroupBody>
            <Dial left={592} top={640} w={103} h={66} cx={641} cy={680.5} value="500K" marks={FREQ_MARKS} pointer={-25} spokes={[-225, -135, -90, -45, -20, 45]} />
          </ChannelGroupBody>
        </Group>

        <Group $w={124}>
          <GroupTitle $color="#808080">Синхронизация</GroupTitle>
          <SyncGrid>
            <SyncCell><Ico><path d="M3 9l6 5-6 4zM9 19c4 0 3-12 7-13h3" stroke={SYNC_STROKE} /></Ico></SyncCell>
            <SyncCell><Ico><path d="M4 18h8V6h8M8 5v9M5 11l3 3 3-3" stroke={SYNC_STROKE} /></Ico></SyncCell>
            <SyncCell $dither><Ico><path d="M3 5h9v13h8M15 6v9M12 12l3 3 3-3" stroke="#909090" /></Ico></SyncCell>
            <SyncCell><Ico><path d="M3 5c6 0 5 14 12 14h6M3 18c6 0 7-13 12-13h6" stroke={SYNC_STROKE} /><path d="M10 8l9 6-6 1-1 6z" fill={SYNC_STROKE} /></Ico></SyncCell>
            <SyncSelect>5<DropArrow $color="#aaa" /></SyncSelect>
            <SyncCell><Ico><path d="M2 8h20M2 16h20" stroke={SYNC_STROKE} /><path d="M13 3h8l-4 4zM13 21h8l-4-4z" fill={SYNC_STROKE} /></Ico></SyncCell>
            <SyncCell $dither><Ico><path d="M2 12h20" stroke="#909090" strokeWidth={1.500} /><path d="M5 7l6 5-6 5zM19 7l-6 5 6 5z" fill="#909090" /></Ico></SyncCell>
          </SyncGrid>
        </Group>

        <Group $w={174}>
          <GroupTitle $color="#a0b8d8">Управление</GroupTitle>
          <ControlGrid>
            <ControlButton $tone="off"><svg width={16} height={16}><rect x={1} y={1} width={5} height={14} rx={1} fill="#909090" /><rect x={10} y={1} width={5} height={14} rx={1} fill="#909090" /></svg></ControlButton>
            <ControlButton><svg width={30} height={22}><path d="M1 11C5 -2 10 -2 15 11s10 13 14 0" stroke="#f00000" fill="none" /></svg></ControlButton>
            <ControlButton $tone="red"><svg width={36} height={24}><path d="M2 7l3 2 2-3 3 4 2-4 3 3 3-3 2 4 3-4 3 3 3-2 3 2" stroke="#e00000" fill="none" /><path d="M32 7l3-3v6zM32 17l3-3v6z" fill="#000080" /><path d="M2 17l3 2 2-3 3 4 2-4 3 3 3-3 2 4 3-4 3 3 3-2" stroke="#0000c0" fill="none" /></svg></ControlButton>
            <ControlButton><Ico><text x={12} y={7} fontSize={7} fontWeight="bold" fill="#000" textAnchor="middle" fontFamily="Liberation Mono">AUTO</text><path d="M2 10h20" stroke="#0050d0" /><circle cx={12} cy={15} r={7} fill="#f0f0f0" stroke="#000" /><path d="M9 12l3 6 3-6" stroke="#000080" /></Ico></ControlButton>
            <ControlButton $span={2}>
              <StartMark width={22} height={24}><path d="M2 3l11 9-11 9z" fill="#10d010" stroke="#008000" strokeWidth={0.500} /></StartMark>
              <StartLabel>Пуск</StartLabel>
            </ControlButton>
            <ControlButton $tone="white"><TimerValue>38.45</TimerValue></ControlButton>
            <ControlButton><Ico><text x={12} y={7} fontSize={7} fontWeight="bold" fill="#000" textAnchor="middle" fontFamily="Liberation Mono">AUTO</text><path d="M2 15h5M5 12l3 3-3 3z" stroke="#0000e0" fill="#0000e0" /><path d="M9 22c0-14 7-14 7-2" stroke="#a00000" /><path d="M16 9l7 6-7 6z" fill="#10c010" stroke="#000" strokeWidth={0.500} /></Ico></ControlButton>
          </ControlGrid>
        </Group>

        <Group $w={67}>
          <GroupTitle $color="#000080">Таймеры</GroupTitle>
          <TimerColumn>
            <TimerButton><ClockFace arrow={TIMER_ARROW.teal} /><DropArrow $big /></TimerButton>
            <TimerButton><ClockFace arrow={TIMER_ARROW.pink} out /><DropArrow $big /></TimerButton>
          </TimerColumn>
        </Group>
      </GroupRow>
    </Deck>

    <StatusBar>
      <StatusCell $w={190}>USB Осциллограф не подключен</StatusCell>
      <StatusCell />
      <StatusCell $w={48}>1.9</StatusCell>
    </StatusBar>

    <Taskbar>
      <TaskItem $w={48}><svg width={16} height={16}><path d="M0 2.300l6.500-.9v6.200H0zM7.500 1.300L16 0v7.600H7.500zM0 8.500h6.500v6.200L0 13.800zM7.500 8.500H16V16l-8.500-1.200z" fill="#fff" /></svg></TaskItem>
      <TaskItem $w={48}><svg width={18} height={18} fill="none"><circle cx={11} cy={7} r={5.500} stroke="#fff" /><path d="M7 11l-6 6" stroke="#fff" strokeWidth={1.300} /></svg></TaskItem>
      <TaskItem $w={48}><svg width={18} height={16} fill="none" stroke="#fff"><path d="M0 .5h11M0 15.500h11M1.500 4.500h9v7h-9zM15.500 0v3M15.500 6v3M15.500 12v3" /></svg></TaskItem>
      <TaskItem $w={48} $before={8} $after={9}><svg width={24} height={24}><circle cx={12} cy={12} r={12} fill="#8a5cf0" /><rect x={10} y={6} width={4} height={8} rx={2} fill="#fff" /><path d="M8 12a4 4 0 008 0M12 16v3" stroke="#fff" fill="none" /></svg></TaskItem>
      {TASK_APPS.map((a, i) => (
        <TaskItem key={i} $active={a.active} $running={a.running}>{a.icon}</TaskItem>
      ))}
      <Tray>
        <TraySlot $w={50}><svg width={18} height={18} fill="none" stroke="#fff"><circle cx={12} cy={5} r={3} /><circle cx={6} cy={9} r={2.500} /><path d="M1 17c0-5 8-5 9 0M10 9c2-1 6-1 7 3" /></svg></TraySlot>
        <TraySlot $w={24}><ChevronUp size={17} strokeWidth={1.300} /></TraySlot>
        <TraySlot $w={24}><svg width={16} height={12} fill="none" stroke="#fff"><path d="M2 1v3M5 1v3M1 4h5v2l-2 2v3" /><rect x={7.500} y={2.500} width={8} height={7} /><rect x={9} y={4} width={5} height={4} fill="#fff" /></svg></TraySlot>
        <TraySlot $w={24}><svg width={14} height={14} fill="none" stroke="#ddd"><path d="M1 13A12 12 0 0113 1M4 13a9 9 0 019-9M7 13a6 6 0 016-6" /><circle cx={11.500} cy={12} r={1.200} fill="#fff" /></svg></TraySlot>
        <TraySlot $w={22}><Volume2 size={17} strokeWidth={1.200} /></TraySlot>
        <TraySlot $w={34}><Keyboard size={22} strokeWidth={1} /></TraySlot>
        <TraySlot $w={32}>ENG</TraySlot>
        <Clock>23:47<br />16.07.2018</Clock>
        <NotifySlot><svg width={17} height={17} fill="none" stroke="#fff"><path d="M.5.500h16v12H11l-2.500 3-2.500-3H.5z" /></svg></NotifySlot>
      </Tray>
    </Taskbar>
  </Page>
);

export default App;
